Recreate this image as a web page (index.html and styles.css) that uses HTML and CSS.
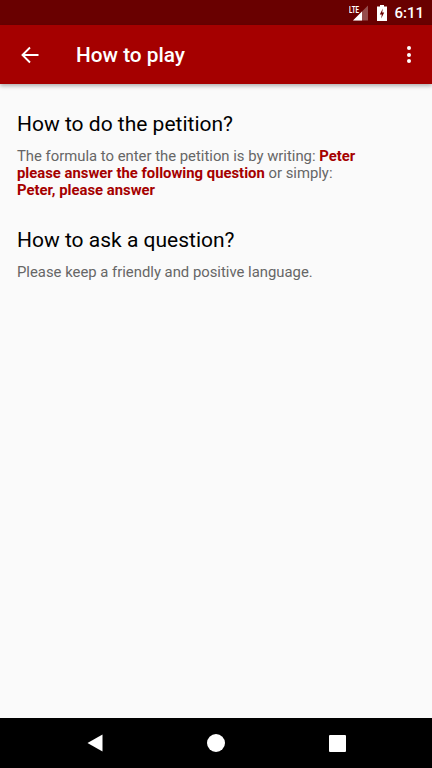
FILE: index.html
```html
<!DOCTYPE html>
<html lang="en">
<head>
    <meta charset="UTF-8">
    <meta name="viewport" content="width=device-width, initial-scale=1.0">
    <title>How to play</title>
    <link rel="stylesheet" href="styles.css">
</head>
<body>
    <div class="status-bar">
        <svg class="signal-icon" width="19" height="16" viewBox="0 0 19 16">
            <path d="M19 0.5V15.5H4z" fill="#fff" opacity="0.3"/>
            <path d="M13 6.5V15.5H4z" fill="#fff"/>
            <text x="0" y="7.5" class="lte" textLength="10" lengthAdjust="spacingAndGlyphs">LTE</text>
        </svg>
        <svg class="battery-icon" width="10" height="16" viewBox="0 0 10 16">
            <path d="M3 0h4v1.5h3V16H0V1.5h3z" fill="#fff"/>
            <path d="M5.8 3.5L2.8 9.5h2L4.2 13.5l3-6h-2z" fill="#690000"/>
        </svg>
        <span class="clock">6:11</span>
    </div>
    <header class="toolbar">
        <svg class="back-icon" width="18" height="18" viewBox="0 0 18 18">
            <path d="M17.5 9H2M9 1.5L1.5 9 9 16.5" fill="none" stroke="#fff" stroke-width="1.9"/>
        </svg>
        <h1>How to play</h1>
        <div class="menu-dots"><i></i><i></i><i></i></div>
    </header>
    <main class="content">
        <h2>How to do the petition?</h2>
        <p>The formula to enter the petition is by writing: <b>Peter please answer the following question</b> or simply: <b>Peter, please answer</b></p>
        <h2>How to ask a question?</h2>
        <p>Please keep a friendly and positive language.</p>
    </main>
    <nav class="nav-bar">
        <svg width="16" height="18" viewBox="0 0 16 18"><path d="M15.5 0.5V17.5L0.5 9z" fill="#fff"/></svg>
        <span class="nav-home"></span>
        <span class="nav-recent"></span>
    </nav>
</body>
</html>
```
FILE: styles.css
```css
* {
    box-sizing: border-box;
}
body {
    font-family: Roboto, sans-serif;
    display: flex;
    flex-direction: column;
    height: 768px;
    margin: 0;
    background-color: #fafafa;
    overflow: hidden;
}
.status-bar {
    display: flex;
    align-items: center;
    justify-content: flex-end;
    height: 25px;
    padding-right: 8px;
    background-color: #690000;
    color: #fff;
}
.signal-icon {
    margin-right: 9px;
}
.lte {
    font-size: 9.5px;
    font-weight: 700;
    fill: #fff;
}
.battery-icon {
    margin-right: 7px;
}
.clock {
    font-size: 15px;
    font-weight: 500;
}
.toolbar {
    display: flex;
    align-items: center;
    height: 59px;
    padding: 0 21px;
    background-color: #a50000;
    color: #fff;
    box-shadow: 0 2px 4px rgba(0, 0, 0, 0.3);
    position: relative;
}
.toolbar h1 {
    flex: 1;
    margin: 0 0 0 37px;
    font-size: 20.8px;
    font-weight: 500;
}
.menu-dots {
    display: flex;
    flex-direction: column;
    gap: 2.5px;
}
.menu-dots i {
    width: 4px;
    height: 4px;
    border-radius: 50%;
    background-color: #fff;
}
.content {
    flex: 1;
    padding: 27px 17px 0;
}
.content h2 {
    margin: 0 0 11px;
    font-size: 21px;
    font-weight: 400;
    line-height: 26px;
    color: #000;
}
.content p {
    max-width: 350px;
    margin: 0 0 28px;
    font-size: 14.85px;
    line-height: 17px;
    color: #666;
}
.content b {
    font-weight: 700;
    color: #a50000;
}
.nav-bar {
    display: flex;
    align-items: center;
    height: 50px;
    padding: 0 86px 0 87px;
    justify-content: space-between;
    background-color: #000;
}
.nav-home {
    width: 18px;
    height: 18px;
    border-radius: 50%;
    background-color: #fff;
}
.nav-recent {
    width: 17px;
    height: 17px;
    border-radius: 1px;
    background-color: #fff;
}
```
